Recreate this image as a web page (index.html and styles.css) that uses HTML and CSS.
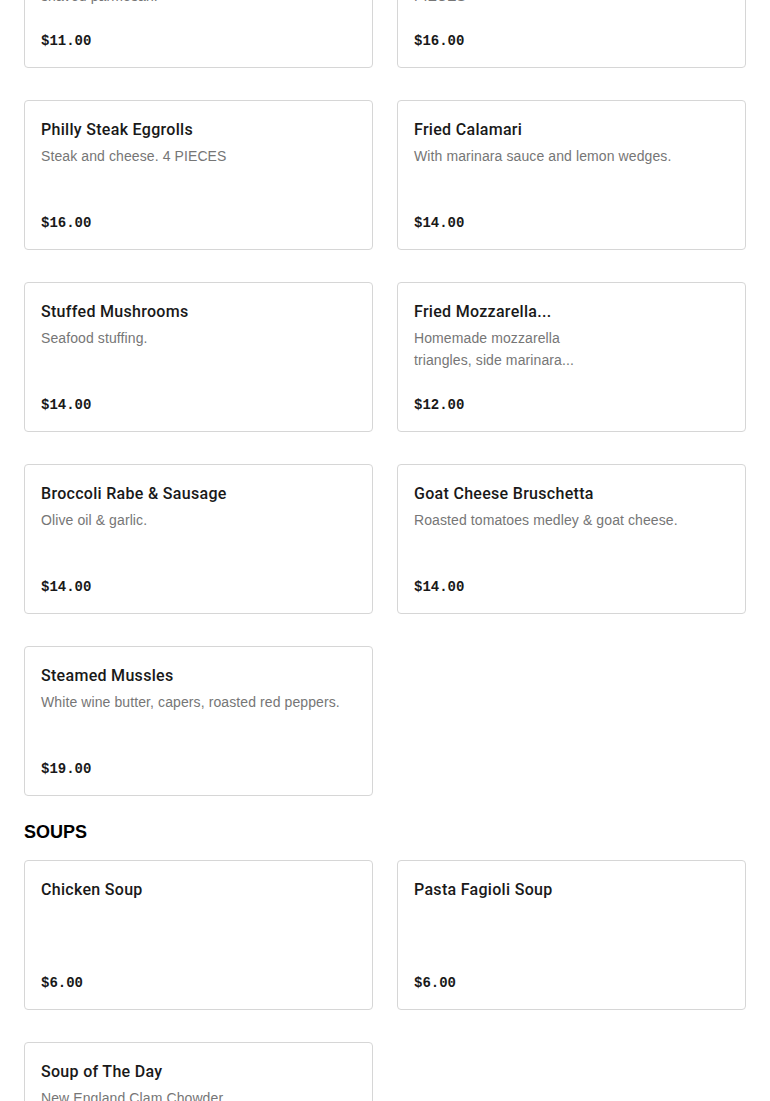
FILE: index.html
```html
<!DOCTYPE html>
<html>
<head>
<meta charset="utf-8">
<link rel="stylesheet" href="styles.css">
</head>
<body>
<div class="page">
  <div class="grid">
    <div class="card">
      <div class="title">Caesar Salad</div>
      <div class="desc narrow">Romaine hearts, croutons, shaved parmesan.</div>
      <div class="price">$11.00</div>
    </div>
    <div class="card">
      <div class="title">Buffalo Wings</div>
      <div class="desc narrow">Celery and blue cheese. 8 PIECES</div>
      <div class="price">$16.00</div>
    </div>
    <div class="card">
      <div class="title">Philly Steak Eggrolls</div>
      <div class="desc">Steak and cheese. 4 PIECES</div>
      <div class="price">$16.00</div>
    </div>
    <div class="card">
      <div class="title">Fried Calamari</div>
      <div class="desc">With marinara sauce and lemon wedges.</div>
      <div class="price">$14.00</div>
    </div>
    <div class="card">
      <div class="title">Stuffed Mushrooms</div>
      <div class="desc">Seafood stuffing.</div>
      <div class="price">$14.00</div>
    </div>
    <div class="card">
      <div class="title">Fried Mozzarella...</div>
      <div class="desc narrow">Homemade mozzarella<br>triangles, side marinara...</div>
      <div class="price">$12.00</div>
    </div>
    <div class="card">
      <div class="title">Broccoli Rabe &amp; Sausage</div>
      <div class="desc">Olive oil &amp; garlic.</div>
      <div class="price">$14.00</div>
    </div>
    <div class="card">
      <div class="title">Goat Cheese Bruschetta</div>
      <div class="desc">Roasted tomatoes medley &amp; goat cheese.</div>
      <div class="price">$14.00</div>
    </div>
    <div class="card">
      <div class="title">Steamed Mussles</div>
      <div class="desc">White wine butter, capers, roasted red peppers.</div>
      <div class="price">$19.00</div>
    </div>
  </div>

  <h2 class="section">SOUPS</h2>
  <div class="grid">
    <div class="card">
      <div class="title">Chicken Soup</div>
      <div class="price">$6.00</div>
    </div>
    <div class="card">
      <div class="title">Pasta Fagioli Soup</div>
      <div class="price">$6.00</div>
    </div>
    <div class="card">
      <div class="title">Soup of The Day</div>
      <div class="desc">New England Clam Chowder</div>
      <div class="price">$6.00</div>
    </div>
  </div>
</div>
</body>
</html>
```

FILE: styles.css
```css
html, body {
  margin: 0;
  padding: 0;
  background: #ffffff;
}
body {
  font-family: "Liberation Sans", Arial, sans-serif;
  color: #191919;
  overflow: hidden;
}
.page {
  margin-top: -82px;
  padding: 0 24px;
}
.grid {
  display: grid;
  grid-template-columns: 1fr 1fr;
  column-gap: 24px;
  row-gap: 32px;
}
.card {
  box-sizing: border-box;
  height: 150px;
  border: 1px solid #d6d6d6;
  border-radius: 4px;
  padding: 16px;
  display: flex;
  flex-direction: column;
}
.title {
  font-family: Roboto, "Liberation Sans", sans-serif;
  font-size: 16px;
  font-weight: 500;
  line-height: 24px;
  letter-spacing: 0.3px;
  padding-top: 1px;
  margin-bottom: -1px;
  color: #191919;
}
.desc {
  margin-top: 4px;
  font-size: 14px;
  line-height: 22px;
  letter-spacing: 0.1px;
  color: #767676;
}
.narrow {
  max-width: 190px;
}
.price {
  margin-top: auto;
  font-family: "Liberation Mono", "DejaVu Sans Mono", monospace;
  font-size: 14px;
  font-weight: 700;
  line-height: 20px;
  color: #191919;
}
.section {
  margin: 26px 0 18px;
  font-size: 18px;
  font-weight: 900;
  line-height: 20px;
  letter-spacing: 0;
  color: #000000;
}
```
